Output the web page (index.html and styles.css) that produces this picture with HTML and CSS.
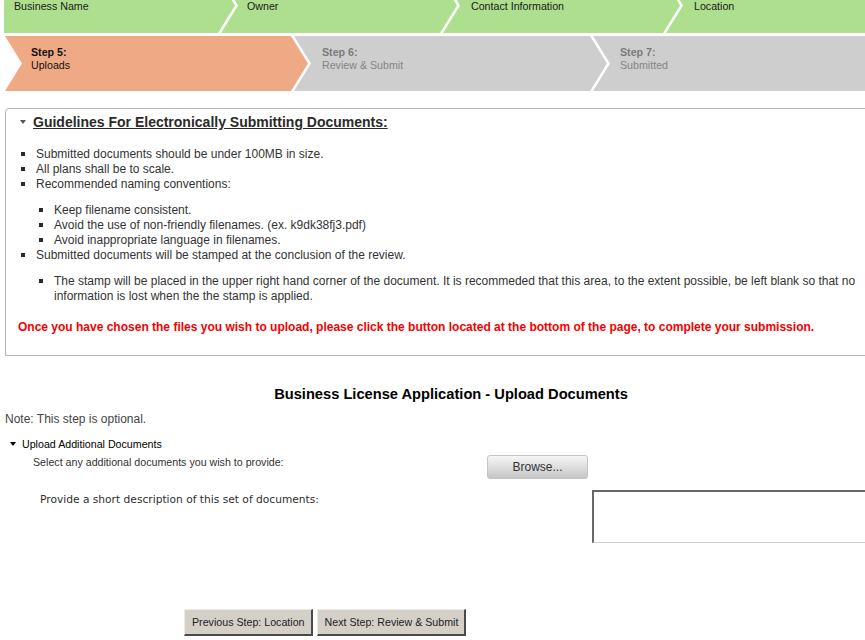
FILE: index.html
```html
<!DOCTYPE html>
<html>
<head>
<meta charset="utf-8">
<title>Business License Application - Upload Documents</title>
<link rel="stylesheet" href="styles.css">
</head>
<body>
<div class="done-steps">
  <div class="done-row">
    <div class="chev chev-first done w1"><span>Business Name</span></div>
    <div class="chev done w2"><span>Owner</span></div>
    <div class="chev done w3"><span>Contact Information</span></div>
    <div class="chev chev-last done w4"><span>Location</span></div>
  </div>
</div>
<div class="step-row">
  <div class="chev current s1">
    <span class="step-num">Step 5:</span>
    <span class="step-name">Uploads</span>
  </div>
  <div class="chev todo s2">
    <span class="step-num">Step 6:</span>
    <span class="step-name">Review &amp; Submit</span>
  </div>
  <div class="chev chev-last todo s3">
    <span class="step-num">Step 7:</span>
    <span class="step-name">Submitted</span>
  </div>
</div>

<div class="page">
  <div class="guide-box">
    <div class="guide-head"><span class="tri-small"></span><span class="guide-title">Guidelines For Electronically Submitting Documents:</span></div>
    <ul class="guide-list">
      <li>Submitted documents should be under 100MB in size.</li>
      <li>All plans shall be to scale.</li>
      <li>Recommended naming conventions:
        <ul class="sub-list">
          <li>Keep filename consistent.</li>
          <li>Avoid the use of non-friendly filenames. (ex. k9dk38fj3.pdf)</li>
          <li>Avoid inappropriate language in filenames.</li>
        </ul>
      </li>
      <li>Submitted documents will be stamped at the conclusion of the review.
        <ul class="sub-list">
          <li>The stamp will be placed in the upper right hand corner of the document. It is recommeded that this area, to the extent possible, be left blank so that no information is lost when the the stamp is applied.</li>
        </ul>
      </li>
    </ul>
    <p class="guide-warning">Once you have chosen the files you wish to upload, please click the button located at the bottom of the page, to complete your submission.</p>
  </div>

  <h2 class="page-title">Business License Application - Upload Documents</h2>
  <p class="note">Note: This step is optional.</p>

  <div class="upload">
    <div class="upload-head"><span class="tri"></span><span>Upload Additional Documents</span></div>
    <div class="upload-row row-files">
      <span class="select-label">Select any additional documents you wish to provide:</span>
      <button class="browse" type="button">Browse...</button>
    </div>
    <div class="upload-row row-desc">
      <span class="desc-label">Provide a short description of this set of documents:</span>
      <textarea class="desc-input"></textarea>
    </div>
  </div>

  <div class="nav-buttons">
    <button class="nav-btn" type="button">Previous Step: Location</button>
    <button class="nav-btn" type="button">Next Step: Review &amp; Submit</button>
  </div>
</div>
</body>
</html>
```

FILE: styles.css
```css
html {
  overflow: hidden;
}
body {
  margin: 0;
  background: #fff;
  font-family: "Liberation Sans", Arial, sans-serif;
  color: #333;
}

/* ---------- chevron progress bars ---------- */
.done-steps {
  height: 33px;
  overflow: hidden;
  margin-bottom: 3px;
}
.done-row {
  display: flex;
  height: 55px;
  margin-top: -22px;
}
.step-row {
  display: flex;
  height: 55px;
}
.chev {
  box-sizing: border-box;
  flex: none;
  height: 100%;
  display: flex;
  font-size: 10.67px;
  clip-path: polygon(0 0, calc(100% - 17px) 0, 100% 50%, calc(100% - 17px) 100%, 0 100%, 17px 50%);
  margin-left: -14px;
}
.chev-first {
  clip-path: polygon(0 0, calc(100% - 17px) 0, 100% 50%, calc(100% - 17px) 100%, 0 100%);
}
.chev-last {
  flex: 1;
  clip-path: polygon(0 0, 100% 0, 100% 100%, 0 100%, 17px 50%);
}
.done {
  background: #aedf8e;
  color: #1a1a1a;
  align-items: center;
  padding-top: 1px;
  padding-left: 28px;
}
.w1 { width: 231px; margin-left: 4px; padding-left: 10px; }
.w2 { width: 236px; padding-left: 26px; }
.w3 { width: 237px; }

.current, .todo {
  flex-direction: column;
  padding-top: 10px;
  padding-left: 27px;
  line-height: 13px;
}
.current { background: #efa985; color: #111; }
.todo { background: #cecece; color: #7a7a7a; }
.s1 {
  width: 303px;
  margin-left: 5px;
  padding-left: 26px;
  clip-path: polygon(0 0, calc(100% - 17px) 0, 100% 50%, calc(100% - 17px) 100%, 0 100%, 17px 50%);
}
.s2 { width: 313px; padding-left: 28px; }
.step-num { font-weight: bold; }
.todo .step-name { color: #858585; }

/* ---------- page ---------- */
.page {
  width: 892px;
  margin-left: 5px;
}

.guide-box {
  margin-top: 17px;
  border: 1px solid #b3b3b3;
  border-radius: 4px 4px 0 0;
  padding: 4px 0 20px 0;
}
.guide-head {
  display: flex;
  align-items: center;
  padding-left: 14px;
  line-height: 18px;
}
.tri-small {
  width: 0;
  height: 0;
  border-left: 3px solid transparent;
  border-right: 3px solid transparent;
  border-top: 4px solid #555;
  margin-right: 7px;
  margin-top: -1px;
}
.guide-title {
  font-size: 14px;
  font-weight: bold;
  color: #2a2a2a;
  text-decoration: underline;
}
.guide-list, .sub-list {
  list-style: none;
  margin: 0;
  font-size: 12px;
  line-height: 15px;
  color: #333;
}
.guide-list {
  margin-top: 16px;
  padding-left: 15px;
}
.sub-list {
  margin-top: 11px;
  padding-left: 3px;
}
.guide-list li {
  padding-left: 15px;
}
.guide-list li::before {
  content: "";
  display: inline-block;
  width: 4px;
  height: 4px;
  background: #2a2a2a;
  margin-left: -15px;
  margin-right: 11px;
  vertical-align: 2px;
}
.guide-warning {
  margin: 16px 0 0 0;
  padding-left: 12px;
  font-size: 12px;
  line-height: 15px;
  font-weight: bold;
  color: #f50000;
}

.page-title {
  margin: 29px 0 0 0;
  text-align: center;
  font-size: 14.67px;
  line-height: 18px;
  font-weight: bold;
  color: #000;
}
.note {
  margin: 9px 0 0 0;
  font-size: 12px;
  line-height: 15px;
  color: #444;
}

.upload {
  margin-top: 10px;
}
.upload-head {
  display: flex;
  align-items: center;
  padding-left: 5px;
  font-size: 10.67px;
  line-height: 14px;
  color: #000;
}
.tri {
  width: 0;
  height: 0;
  border-left: 3px solid transparent;
  border-right: 3px solid transparent;
  border-top: 4px solid #000;
  margin-right: 6px;
}
.upload-row {
  display: flex;
  align-items: flex-start;
}
.row-files {
  margin-top: 4px;
  padding-left: 28px;
}
.select-label {
  width: 454px;
  flex: none;
  font-size: 10.67px;
  line-height: 14px;
  color: #333;
}
.browse {
  box-sizing: border-box;
  width: 101px;
  height: 24px;
  padding: 0;
  border: 1px solid #c4c4c4;
  border-radius: 3px;
  background: linear-gradient(#f6f6f6, #dedede 50%, #c6c6c6);
  font-family: "Liberation Sans", Arial, sans-serif;
  font-size: 12px;
  color: #333;
}
.row-desc {
  margin-top: 11px;
  padding-left: 35px;
}
.desc-label {
  width: 552px;
  flex: none;
  padding-top: 3px;
  font-family: "DejaVu Sans", Verdana, sans-serif;
  font-size: 10.67px;
  line-height: 14px;
  color: #2e2e2e;
}
.desc-input {
  box-sizing: border-box;
  width: 300px;
  height: 53px;
  margin: 0;
  resize: none;
  border-top: 2px solid #686868;
  border-left: 2px solid #686868;
  border-right: 1px solid #cfcfcf;
  border-bottom: 1px solid #cfcfcf;
  background: #fff;
}

.nav-buttons {
  display: flex;
  gap: 4px;
  margin-top: 66px;
  padding-left: 179px;
}
.nav-btn {
  box-sizing: border-box;
  height: 27px;
  padding: 0 6px 0 7px;
  background: #d4d0c8;
  border-top: 1px solid #ecebe7;
  border-left: 1px solid #ecebe7;
  border-right: 2px solid #4a4a4a;
  border-bottom: 2px solid #4a4a4a;
  border-radius: 0;
  font-family: "Liberation Sans", Arial, sans-serif;
  font-size: 10.67px;
  color: #222;
}
```
